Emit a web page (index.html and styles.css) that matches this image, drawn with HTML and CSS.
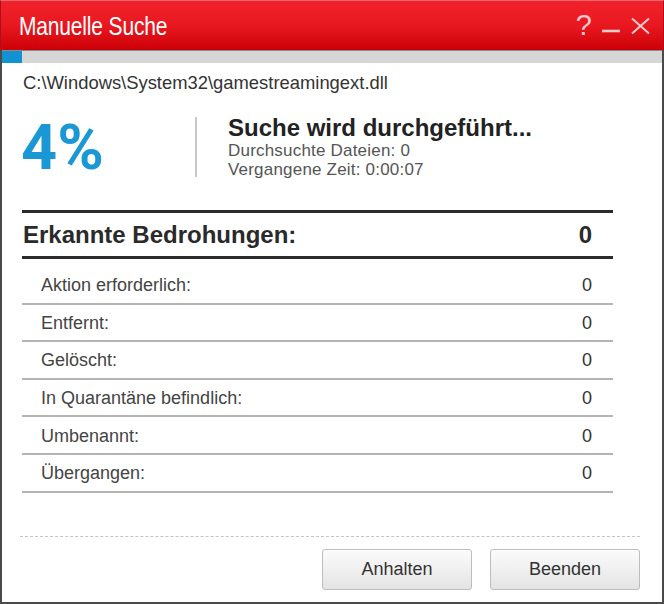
FILE: index.html
```html
<!DOCTYPE html>
<html lang="de">
<head>
<meta charset="utf-8">
<title>Manuelle Suche</title>
<link rel="stylesheet" href="styles.css">
</head>
<body>
<div class="window">
  <header class="titlebar">
    <span class="title">Manuelle Suche</span>
    <div class="controls">
      <span class="ctl help">?</span>
      <svg class="ctl-svg" width="20" height="20" viewBox="0 0 20 20"><line x1="1" y1="15" x2="19" y2="15" stroke="currentColor" stroke-width="2.6"/></svg>
      <svg class="ctl-svg" width="21" height="20" viewBox="0 0 21 20"><path d="M2 2.5 L19 17.5 M19 2.5 L2 17.5" stroke="currentColor" stroke-width="2" fill="none"/></svg>
    </div>
  </header>
  <div class="progress"><div class="progress-fill" style="width:20px"></div></div>
  <main class="content">
    <div class="path">C:\Windows\System32\gamestreamingext.dll</div>
    <section class="status">
      <div class="percent">4%</div>
      <div class="divider"></div>
      <div class="status-text">
        <div class="status-title">Suche wird durchgeführt...</div>
        <div class="status-sub">Durchsuchte Dateien: 0</div>
        <div class="status-sub">Vergangene Zeit: 0:00:07</div>
      </div>
    </section>
    <section class="threats">
      <div class="threats-head">
        <span>Erkannte Bedrohungen:</span>
        <span class="head-val">0</span>
      </div>
      <div class="rows">
        <div class="row"><span>Aktion erforderlich:</span><span class="val">0</span></div>
        <div class="row"><span>Entfernt:</span><span class="val">0</span></div>
        <div class="row"><span>Gelöscht:</span><span class="val">0</span></div>
        <div class="row"><span>In Quarantäne befindlich:</span><span class="val">0</span></div>
        <div class="row"><span>Umbenannt:</span><span class="val">0</span></div>
        <div class="row"><span>Übergangen:</span><span class="val">0</span></div>
      </div>
    </section>
  </main>
  <footer class="footer">
    <button class="btn">Anhalten</button>
    <button class="btn">Beenden</button>
  </footer>
</div>
</body>
</html>
```
FILE: styles.css
```css
* { box-sizing: border-box; }
html, body { margin: 0; padding: 0; background: #ffffff; }
body { font-family: "Liberation Sans", Arial, sans-serif; }

.window {
  width: 664px;
  height: 604px;
  border: 2px solid #4a4a4a;
  border-top: none;
  display: flex;
  flex-direction: column;
  background: #fff;
}

.titlebar {
  height: 50px;
  margin: 0 -2px;
  background: linear-gradient(#f0222b 0%, #e81820 50%, #cc0008 100%);
  border-top: 1px solid #f26a6f;
  border-left: 1px solid #b01015;
  border-right: 1px solid #b01015;
  display: flex;
  align-items: center;
  justify-content: space-between;
  padding: 0 12px 0 18px;
  color: #fff;
}
.title {
  font-size: 25px;
  letter-spacing: -0.2px;
  display: inline-block;
  transform: scaleX(0.84);
  transform-origin: left center;
  margin-top: 2px;
}
.controls {
  display: flex;
  align-items: center;
  gap: 9px;
  color: #f6c9cb;
}
.ctl.help { font-size: 29px; line-height: 1; margin-right: 0; }
.ctl-svg { display: block; }

.progress {
  height: 13px;
  background: #d6d6d6;
  border-top: 1px solid #8a8a8a;
}
.progress-fill { height: 100%; background: #1193d3; }

.content {
  padding: 0 49px 0 20px;
  flex: 1;
}
.path {
  font-size: 18.4px;
  color: #333;
  margin-top: 10px;
  margin-left: 1px;
  line-height: 20px;
}

.status {
  display: flex;
  align-items: center;
  margin-top: 19px;
  height: 70px;
}
.percent {
  font-family: Roboto, "Liberation Sans", sans-serif;
  font-weight: 700;
  font-size: 63px;
  color: #1a98d5;
  width: 174px;
  margin-left: -1px;
  line-height: 1;
}
.divider {
  width: 2px;
  height: 60px;
  background: #c8c8c8;
  margin-right: 30px;
}
.status-text { display: flex; flex-direction: column; margin-left: 1px; }
.status-title {
  font-size: 24px;
  font-weight: 700;
  color: #222;
  line-height: 26px;
}
.status-sub {
  font-size: 17px;
  letter-spacing: 0.2px;
  color: #555;
  line-height: 19.5px;
}

.threats { margin-top: 28px; }
.threats-head {
  display: flex;
  justify-content: space-between;
  align-items: center;
  border-top: 3px solid #2b2b2b;
  border-bottom: 3px solid #2b2b2b;
  height: 49px;
  padding: 0 21px 0 1px;
  font-size: 24px;
  font-weight: 700;
  color: #2a2a2a;
}
.rows { padding-top: 8px; }
.row {
  display: flex;
  justify-content: space-between;
  align-items: center;
  height: 37.6px;
  border-bottom: 2px solid #b4b4b4;
  padding: 2px 21px 0 19px;
  font-size: 18px;
  color: #444;
}
.val { color: #333; }

.footer {
  margin: 0 22px 0 18px;
  border-top: 1px dashed #c4c4c4;
  height: 66px;
  display: flex;
  justify-content: flex-end;
  align-items: flex-start;
  gap: 18px;
  padding-top: 12px;
  padding-right: 0;
}
.btn {
  width: 150px;
  height: 41px;
  border: 1px solid #bdbdbd;
  border-radius: 3px;
  background: linear-gradient(#fbfbfb, #e4e4e4);
  font-family: "Liberation Sans", Arial, sans-serif;
  font-size: 18px;
  color: #333;
  padding: 0;
  box-shadow: inset 0 1px 0 #fff;
}
```
